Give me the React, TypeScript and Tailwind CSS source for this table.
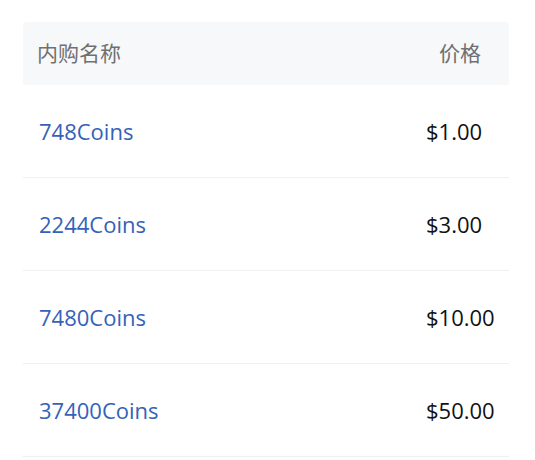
const rows = [
  { name: '748Coins', price: '$1.00' },
  { name: '2244Coins', price: '$3.00' },
  { name: '7480Coins', price: '$10.00' },
  { name: '37400Coins', price: '$50.00' },
];

export default function App() {
  return (
    <div
      className="w-[535px] h-[460px] bg-white pt-[22px] pl-[23px] overflow-hidden"
      style={{ fontFamily: '"Open Sans", "Noto Sans CJK SC", sans-serif' }}
    >
      <div className="w-[486px]">
        <div className="flex items-center h-[63px] bg-[#f7f8fa] rounded-t-[4px] text-[21px] text-[#707070]">
          <div className="flex-1 pl-[14px]">内购名称</div>
          <div className="pr-[28px]">价格</div>
        </div>
        {rows.map((r) => (
          <div key={r.name} className="flex items-center h-[93px] border-b border-[#f0f0f0] text-[22px]">
            <div className="flex-1 pl-[16px] text-[#3462b8]">{r.name}</div>
            <div className="w-[83px] text-[#111]">{r.price}</div>
          </div>
        ))}
      </div>
    </div>
  );
}
